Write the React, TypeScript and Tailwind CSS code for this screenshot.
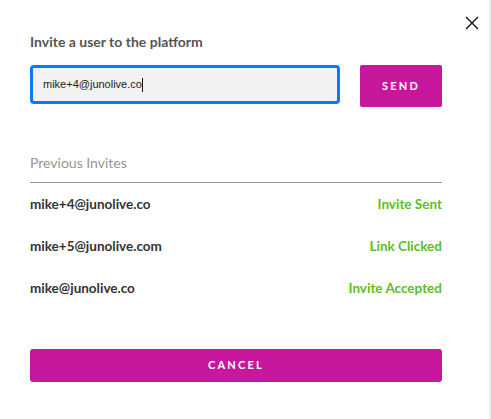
import React from "react";

const invites = [
  { email: "mike+4@junolive.co", status: "Invite Sent" },
  { email: "mike+5@junolive.com", status: "Link Clicked" },
  { email: "mike@junolive.co", status: "Invite Accepted" },
];

const App = () => {
  return (
    <div className="relative min-h-[419px] w-[491px] bg-white border-r-2 border-[#f0f0f0] font-['Lato',sans-serif]">
      <button className="absolute left-[465px] top-[16px] w-[14px] h-[14px]">
        <svg viewBox="0 0 14 14" width="14" height="14">
          <path d="M1 1 L13 13 M13 1 L1 13" stroke="#111" strokeWidth="1.4" />
        </svg>
      </button>

      <div className="pl-[30px] pt-[33px] w-[442px]">
        <h2 className="text-[14px] leading-[18px] font-bold text-[#555]">
          Invite a user to the platform
        </h2>

        <div className="flex items-start gap-[20px] mt-[14px]">
          <div className="w-[311px] h-[39px] rounded-[4px] border-[3px] border-[#0a78ff] bg-[#f2f2f2] flex items-center pl-[10px]">
            <span className="text-[11px] text-[#222] font-['Liberation_Sans',Arial,sans-serif]">
              mike+4@junolive.co
            </span>
            <span className="w-px h-[14px] bg-[#111]" />
          </div>
          <button className="w-[82px] h-[42px] rounded-[2px] bg-[#c7179c] text-white text-[11px] font-bold tracking-[0.2em]">
            SEND
          </button>
        </div>

        <div className="mt-[47px] pb-[10px] border-b border-[#999] text-[14px] leading-[18px] text-[#969696]">
          Previous Invites
        </div>

        <div className="flex flex-col">
          {invites.map((i) => (
            <div key={i.email} className="h-[42px] flex items-center justify-between text-[13.5px] font-bold">
              <span className="text-[#333]">{i.email}</span>
              <span className="text-[#5bbf1f]">{i.status}</span>
            </div>
          ))}
        </div>

        <button className="mt-[40px] w-full h-[33px] rounded-[3px] bg-[#c7179c] text-white text-[11px] font-bold tracking-[0.2em]">
          CANCEL
        </button>
      </div>
    </div>
  );
};

export default App;
